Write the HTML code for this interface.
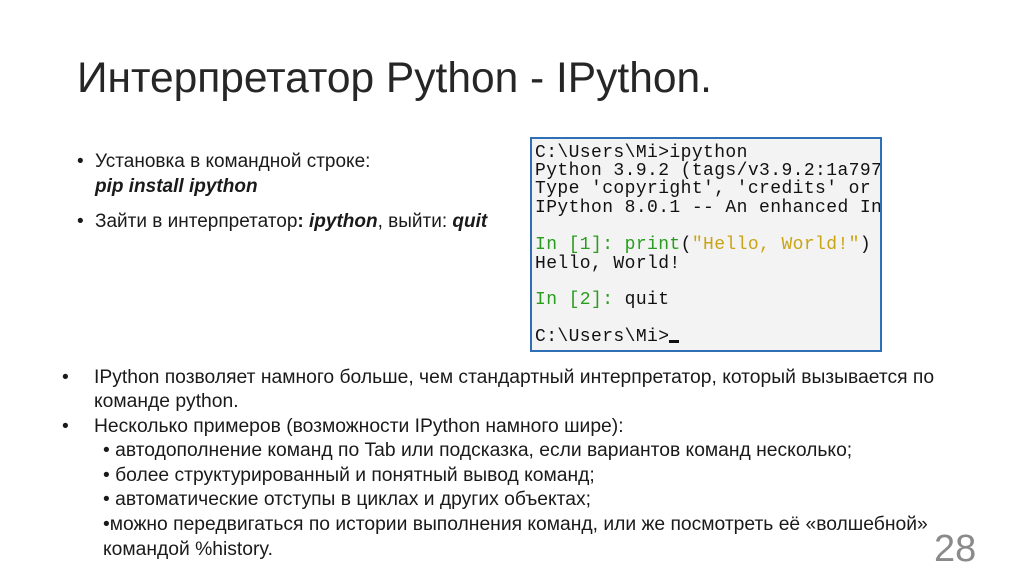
<!DOCTYPE html>
<html><head><meta charset="utf-8"><style>
html,body{margin:0;padding:0;background:#fff;width:1024px;height:574px;overflow:hidden;position:relative;font-family:"Liberation Sans",sans-serif;color:#1a1a1a}
.a{position:absolute;white-space:nowrap}
.t{left:77px;top:55px;font-size:42.5px;color:#262626}
.b{font-size:19px}
.term{position:absolute;left:530px;top:137px;width:348px;height:211px;border:2px solid #2f6fb5;background:#f3f3f3;overflow:hidden}
.term div{position:absolute;left:3px;font-family:"Liberation Mono",monospace;font-size:18px;letter-spacing:0.4px;color:#111;white-space:nowrap}
.g{color:#2a9d1e}.y{color:#c9a415}
.p{font-size:19.3px}
</style></head><body>
<div class="a t">Интерпретатор Python - IPython.</div>
<div class="a b" style="left:77px;top:151px">•</div>
<div class="a b" style="left:95px;top:151px">Установка в командной строке:</div>
<div class="a b" style="left:95px;top:176px"><b><i>pip install ipython</i></b></div>
<div class="a b" style="left:77px;top:211px">•</div>
<div class="a b" style="left:95px;top:211px">Зайти в интерпретатор<b>: <i>ipython</i></b>, выйти: <b><i>quit</i></b></div>
<div class="term">
<div style="top:4px">C:\Users\Mi&gt;ipython</div>
<div style="top:22px">Python 3.9.2 (tags/v3.9.2:1a797</div>
<div style="top:40px">Type 'copyright', 'credits' or</div>
<div style="top:59px">IPython 8.0.1 -- An enhanced In</div>
<div style="top:96px"><span class="g">In [1]: print</span>(<span class="y">"Hello, World!"</span>)</div>
<div style="top:115px">Hello, World!</div>
<div style="top:151px"><span class="g">In [2]:</span> quit</div>
<div style="top:188px">C:\Users\Mi&gt;<span style="display:inline-block;width:10px;height:3px;background:#111;vertical-align:-2px"></span></div>
</div>
<div class="a p" style="left:62px;top:367px">•</div>
<div class="a p" style="left:94px;top:367px">IPython позволяет намного больше, чем стандартный интерпретатор, который вызывается по</div>
<div class="a p" style="left:94px;top:391px">команде python.</div>
<div class="a p" style="left:62px;top:416px">•</div>
<div class="a p" style="left:94px;top:416px">Несколько примеров (возможности IPython намного шире):</div>
<div class="a p" style="left:103px;top:440px">• автодополнение команд по Tab или подсказка, если вариантов команд несколько;</div>
<div class="a p" style="left:103px;top:465px">• более структурированный и понятный вывод команд;</div>
<div class="a p" style="left:103px;top:489px">• автоматические отступы в циклах и других объектах;</div>
<div class="a p" style="left:103px;top:514px">•можно передвигаться по истории выполнения команд, или же посмотреть её «волшебной»</div>
<div class="a p" style="left:103px;top:539px">командой %history.</div>
<div class="a" style="left:934px;top:528px;font-size:38px;color:#8a8a8a">28</div>
</body></html>
